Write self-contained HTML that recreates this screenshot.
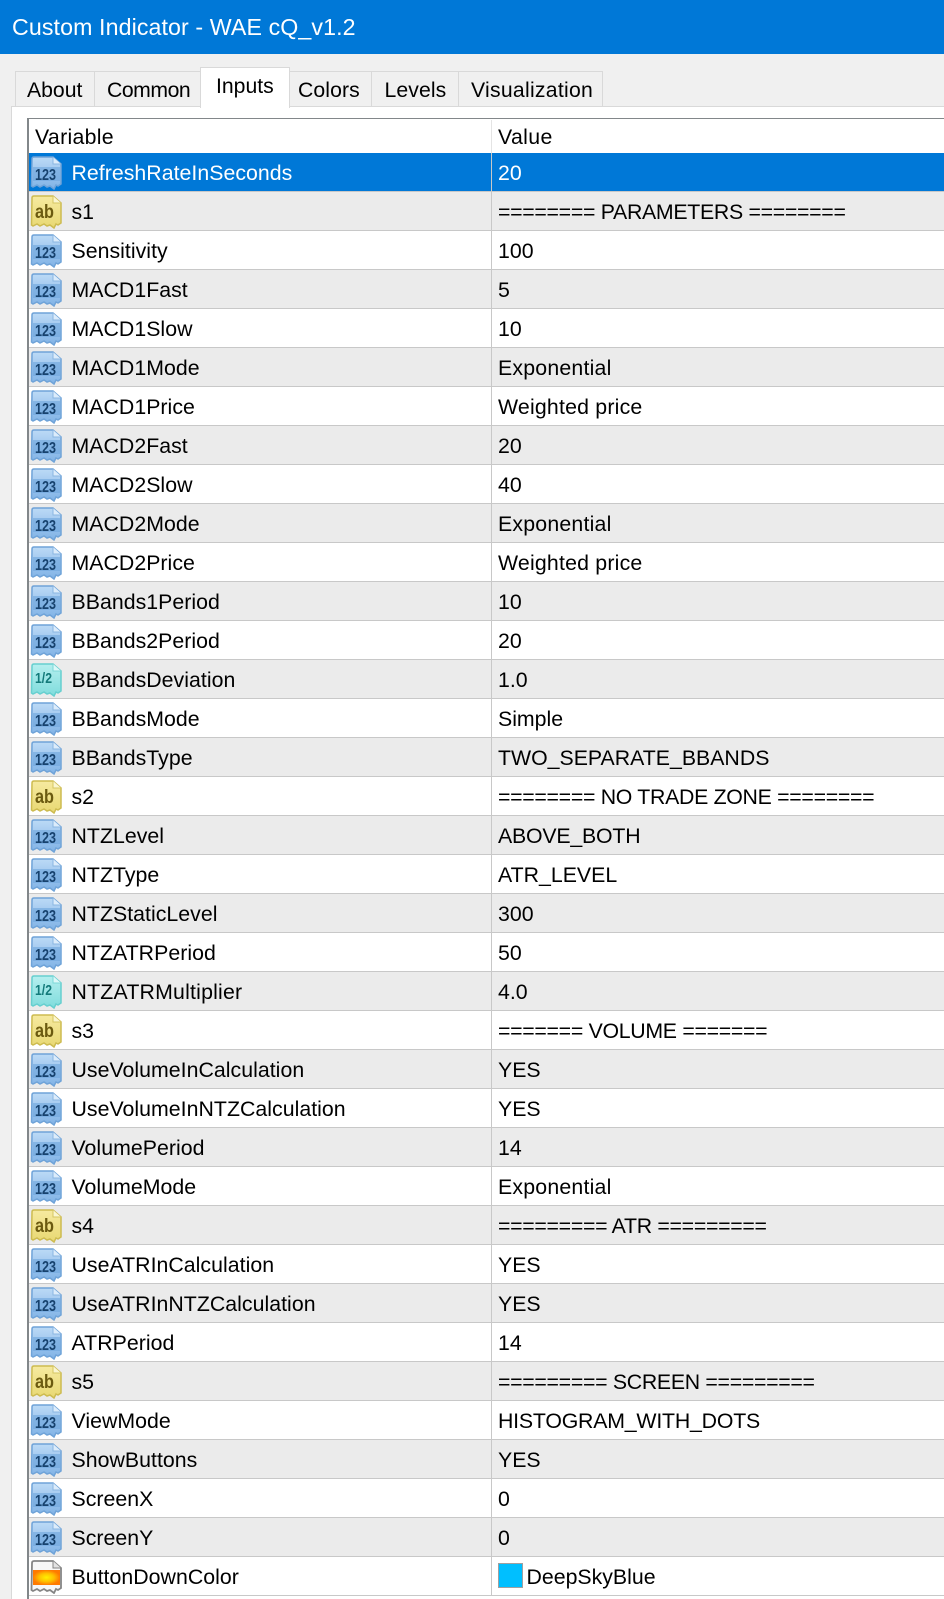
<!DOCTYPE html>
<html><head><meta charset="utf-8"><style>
html,body{margin:0;padding:0;width:944px;height:1599px;overflow:hidden;background:#fff;font-family:"Liberation Sans",sans-serif;color:#000}
#title{position:absolute;left:0;top:0;width:944px;height:54px;background:#0078d7;color:#fff;font-size:23.2px;line-height:55px;text-indent:12px;letter-spacing:.1px}
#bar{position:absolute;left:0;top:54px;width:944px;height:1545px;background:#f0f0f0}
#panel{position:absolute;left:11px;top:106px;width:933px;height:1493px;background:#fff;border-top:1px solid #d9d9d9;border-left:1px solid #d9d9d9;box-sizing:border-box}
.tab{position:absolute;top:71px;height:36px;box-sizing:border-box;background:#f0f0f0;border:1px solid #d9d9d9;border-bottom:0;font-size:21.2px;line-height:38px;white-space:nowrap}
.tab.on{top:67px;height:41px;background:#fff;line-height:37px;z-index:2}
#table{position:absolute;left:27px;top:118px;width:917px;height:1481px;border-top:1px solid #82878a;border-left:2px solid #82878a;box-sizing:border-box;background:#fff}
.h{position:absolute;top:137px;font-size:21.3px;line-height:0}
#hd{position:absolute;left:491px;top:120px;width:1px;height:33px;background:#e4e4e4}
#rows{position:absolute;left:29px;top:153px;width:915px}
.r{position:relative;height:39px;box-sizing:border-box;border-bottom:1px solid #c8c8c8;font-size:21.3px;line-height:40px;background:#fff}
.g{background:#ebebeb}
.s{background:#0078d7;color:#fff}
.r svg{position:absolute;left:1px;top:3px;width:33px;height:34px}
.n{position:absolute;left:42.5px;top:0;white-space:nowrap;letter-spacing:.03px}
.v{position:absolute;left:462px;top:0;bottom:0;border-left:1px solid #c8c8c8;padding-left:6px;white-space:nowrap}
.l{letter-spacing:.2px}
.e{letter-spacing:-.3px}
.u{letter-spacing:-.2px}
.sw{position:absolute;left:6px;top:6px;width:23px;height:23px;background:#00bfff;border:1px solid #a0a0a0}
.t{font:bold 15.5px "Liberation Sans",sans-serif;fill:#17426e}
.a{font:bold 19px "Liberation Sans",sans-serif;fill:#6b5a10}
.q{font:bold 15px "Liberation Sans",sans-serif;fill:#137a7a}
</style></head><body>
<svg width="0" height="0" style="position:absolute"><defs>
<linearGradient id="b" x1="0" y1="0" x2="0" y2="1"><stop offset="0" stop-color="#bcdaf6"/><stop offset="1" stop-color="#7fb2e6"/></linearGradient>
<linearGradient id="y" x1="0" y1="0" x2="0" y2="1"><stop offset="0" stop-color="#f6eaa0"/><stop offset="1" stop-color="#e8d872"/></linearGradient>
<linearGradient id="c" x1="0" y1="0" x2="0" y2="1"><stop offset="0" stop-color="#b5efef"/><stop offset="1" stop-color="#7fdcdc"/></linearGradient>
<radialGradient id="o"><stop offset="0" stop-color="#fff000"/><stop offset=".55" stop-color="#ffc000"/><stop offset="1" stop-color="#ff7a00"/></radialGradient>
<path id="p" d="M2 3Q2 1 4 1H23L31 8V28L28 30L26 29L24 33L20 30L17 31L14 29L10 31L7 29L3 31L1.5 30Z"/>
<symbol id="i1" viewBox="0 0 33 34"><use href="#p" fill="url(#b)" stroke="#6fa3d8" stroke-width="1.5"/><path d="M23 1V8H31" fill="#dcecfb" stroke="#8ab6e2"/><rect x="3" y="11" width="27" height="14" fill="#6ea5dc" opacity=".6"/></symbol>
<symbol id="i2" viewBox="0 0 33 34"><use href="#p" fill="url(#y)" stroke="#cdbb50" stroke-width="1.5"/><path d="M23 1V8H31" fill="#fbf6cf" stroke="#d6c662"/></symbol>
<symbol id="i3" viewBox="0 0 33 34"><use href="#p" fill="url(#c)" stroke="#66cfcf" stroke-width="1.5"/><path d="M23 1V8H31" fill="#dcf8f8" stroke="#7cd8d8"/></symbol>
<symbol id="i4" viewBox="0 0 33 34"><use href="#p" fill="#f7f7f7" stroke="#858585" stroke-width="1.8"/><path d="M23 1V8H31" fill="#e2e2e2" stroke="#858585"/><rect x="3" y="10" width="27" height="15" fill="url(#o)"/></symbol>
</defs></svg>
<div id="bar"></div>
<div id="title">Custom Indicator - WAE cQ_v1.2</div>
<div class="tab" style="left:15px;width:80px;padding-left:11px">About</div>
<div class="tab" style="left:94px;width:107px;padding-left:12px;letter-spacing:-.45px">Common</div>
<div class="tab on" style="left:200px;width:90px;padding-left:15px">Inputs</div>
<div class="tab" style="left:289px;width:83px;padding-left:8px;letter-spacing:.1px">Colors</div>
<div class="tab" style="left:371px;width:88px;padding-left:12.5px;letter-spacing:.1px">Levels</div>
<div class="tab" style="left:458px;width:145px;padding-left:12px;letter-spacing:.27px">Visualization</div>
<div id="panel"></div>
<div id="table"></div>
<div class="h" style="left:35px;letter-spacing:.3px">Variable</div>
<div class="h" style="left:498px;letter-spacing:.35px">Value</div>
<div id="hd"></div>
<div id="rows">
<div class="r s"><svg><use href="#i1"/><text class="t" x="5" y="24" textLength="21" lengthAdjust="spacingAndGlyphs">123</text></svg><span class="n">RefreshRateInSeconds</span><span class="v">20</span></div>
<div class="r g"><svg><use href="#i2"/><text class="a" x="5" y="23" textLength="19" lengthAdjust="spacingAndGlyphs">ab</text></svg><span class="n">s1</span><span class="v e">======== PARAMETERS ========</span></div>
<div class="r"><svg><use href="#i1"/><text class="t" x="5" y="24" textLength="21" lengthAdjust="spacingAndGlyphs">123</text></svg><span class="n">Sensitivity</span><span class="v">100</span></div>
<div class="r g"><svg><use href="#i1"/><text class="t" x="5" y="24" textLength="21" lengthAdjust="spacingAndGlyphs">123</text></svg><span class="n">MACD1Fast</span><span class="v">5</span></div>
<div class="r"><svg><use href="#i1"/><text class="t" x="5" y="24" textLength="21" lengthAdjust="spacingAndGlyphs">123</text></svg><span class="n">MACD1Slow</span><span class="v">10</span></div>
<div class="r g"><svg><use href="#i1"/><text class="t" x="5" y="24" textLength="21" lengthAdjust="spacingAndGlyphs">123</text></svg><span class="n">MACD1Mode</span><span class="v l">Exponential</span></div>
<div class="r"><svg><use href="#i1"/><text class="t" x="5" y="24" textLength="21" lengthAdjust="spacingAndGlyphs">123</text></svg><span class="n">MACD1Price</span><span class="v l">Weighted price</span></div>
<div class="r g"><svg><use href="#i1"/><text class="t" x="5" y="24" textLength="21" lengthAdjust="spacingAndGlyphs">123</text></svg><span class="n">MACD2Fast</span><span class="v">20</span></div>
<div class="r"><svg><use href="#i1"/><text class="t" x="5" y="24" textLength="21" lengthAdjust="spacingAndGlyphs">123</text></svg><span class="n">MACD2Slow</span><span class="v">40</span></div>
<div class="r g"><svg><use href="#i1"/><text class="t" x="5" y="24" textLength="21" lengthAdjust="spacingAndGlyphs">123</text></svg><span class="n">MACD2Mode</span><span class="v l">Exponential</span></div>
<div class="r"><svg><use href="#i1"/><text class="t" x="5" y="24" textLength="21" lengthAdjust="spacingAndGlyphs">123</text></svg><span class="n">MACD2Price</span><span class="v l">Weighted price</span></div>
<div class="r g"><svg><use href="#i1"/><text class="t" x="5" y="24" textLength="21" lengthAdjust="spacingAndGlyphs">123</text></svg><span class="n">BBands1Period</span><span class="v">10</span></div>
<div class="r"><svg><use href="#i1"/><text class="t" x="5" y="24" textLength="21" lengthAdjust="spacingAndGlyphs">123</text></svg><span class="n">BBands2Period</span><span class="v">20</span></div>
<div class="r g"><svg><use href="#i3"/><text class="q" x="5" y="20" textLength="17" lengthAdjust="spacingAndGlyphs">1/2</text></svg><span class="n">BBandsDeviation</span><span class="v">1.0</span></div>
<div class="r"><svg><use href="#i1"/><text class="t" x="5" y="24" textLength="21" lengthAdjust="spacingAndGlyphs">123</text></svg><span class="n">BBandsMode</span><span class="v">Simple</span></div>
<div class="r g"><svg><use href="#i1"/><text class="t" x="5" y="24" textLength="21" lengthAdjust="spacingAndGlyphs">123</text></svg><span class="n">BBandsType</span><span class="v">TWO_SEPARATE_BBANDS</span></div>
<div class="r"><svg><use href="#i2"/><text class="a" x="5" y="23" textLength="19" lengthAdjust="spacingAndGlyphs">ab</text></svg><span class="n">s2</span><span class="v e">======== NO TRADE ZONE ========</span></div>
<div class="r g"><svg><use href="#i1"/><text class="t" x="5" y="24" textLength="21" lengthAdjust="spacingAndGlyphs">123</text></svg><span class="n">NTZLevel</span><span class="v u">ABOVE_BOTH</span></div>
<div class="r"><svg><use href="#i1"/><text class="t" x="5" y="24" textLength="21" lengthAdjust="spacingAndGlyphs">123</text></svg><span class="n">NTZType</span><span class="v">ATR_LEVEL</span></div>
<div class="r g"><svg><use href="#i1"/><text class="t" x="5" y="24" textLength="21" lengthAdjust="spacingAndGlyphs">123</text></svg><span class="n">NTZStaticLevel</span><span class="v">300</span></div>
<div class="r"><svg><use href="#i1"/><text class="t" x="5" y="24" textLength="21" lengthAdjust="spacingAndGlyphs">123</text></svg><span class="n">NTZATRPeriod</span><span class="v">50</span></div>
<div class="r g"><svg><use href="#i3"/><text class="q" x="5" y="20" textLength="17" lengthAdjust="spacingAndGlyphs">1/2</text></svg><span class="n" style="letter-spacing:.2px">NTZATRMultiplier</span><span class="v">4.0</span></div>
<div class="r"><svg><use href="#i2"/><text class="a" x="5" y="23" textLength="19" lengthAdjust="spacingAndGlyphs">ab</text></svg><span class="n">s3</span><span class="v e">======= VOLUME =======</span></div>
<div class="r g"><svg><use href="#i1"/><text class="t" x="5" y="24" textLength="21" lengthAdjust="spacingAndGlyphs">123</text></svg><span class="n">UseVolumeInCalculation</span><span class="v">YES</span></div>
<div class="r"><svg><use href="#i1"/><text class="t" x="5" y="24" textLength="21" lengthAdjust="spacingAndGlyphs">123</text></svg><span class="n">UseVolumeInNTZCalculation</span><span class="v">YES</span></div>
<div class="r g"><svg><use href="#i1"/><text class="t" x="5" y="24" textLength="21" lengthAdjust="spacingAndGlyphs">123</text></svg><span class="n">VolumePeriod</span><span class="v">14</span></div>
<div class="r"><svg><use href="#i1"/><text class="t" x="5" y="24" textLength="21" lengthAdjust="spacingAndGlyphs">123</text></svg><span class="n">VolumeMode</span><span class="v l">Exponential</span></div>
<div class="r g"><svg><use href="#i2"/><text class="a" x="5" y="23" textLength="19" lengthAdjust="spacingAndGlyphs">ab</text></svg><span class="n">s4</span><span class="v e">========= ATR =========</span></div>
<div class="r"><svg><use href="#i1"/><text class="t" x="5" y="24" textLength="21" lengthAdjust="spacingAndGlyphs">123</text></svg><span class="n">UseATRInCalculation</span><span class="v">YES</span></div>
<div class="r g"><svg><use href="#i1"/><text class="t" x="5" y="24" textLength="21" lengthAdjust="spacingAndGlyphs">123</text></svg><span class="n">UseATRInNTZCalculation</span><span class="v">YES</span></div>
<div class="r"><svg><use href="#i1"/><text class="t" x="5" y="24" textLength="21" lengthAdjust="spacingAndGlyphs">123</text></svg><span class="n">ATRPeriod</span><span class="v">14</span></div>
<div class="r g"><svg><use href="#i2"/><text class="a" x="5" y="23" textLength="19" lengthAdjust="spacingAndGlyphs">ab</text></svg><span class="n">s5</span><span class="v e">========= SCREEN =========</span></div>
<div class="r"><svg><use href="#i1"/><text class="t" x="5" y="24" textLength="21" lengthAdjust="spacingAndGlyphs">123</text></svg><span class="n">ViewMode</span><span class="v u">HISTOGRAM_WITH_DOTS</span></div>
<div class="r g"><svg><use href="#i1"/><text class="t" x="5" y="24" textLength="21" lengthAdjust="spacingAndGlyphs">123</text></svg><span class="n">ShowButtons</span><span class="v">YES</span></div>
<div class="r"><svg><use href="#i1"/><text class="t" x="5" y="24" textLength="21" lengthAdjust="spacingAndGlyphs">123</text></svg><span class="n">ScreenX</span><span class="v">0</span></div>
<div class="r g"><svg><use href="#i1"/><text class="t" x="5" y="24" textLength="21" lengthAdjust="spacingAndGlyphs">123</text></svg><span class="n">ScreenY</span><span class="v">0</span></div>
<div class="r"><svg><use href="#i4"/></svg><span class="n">ButtonDownColor</span><span class="v"><i class="sw"></i><span style="position:absolute;left:34.5px;top:0">DeepSkyBlue</span></span></div>
</div>
</body></html>
